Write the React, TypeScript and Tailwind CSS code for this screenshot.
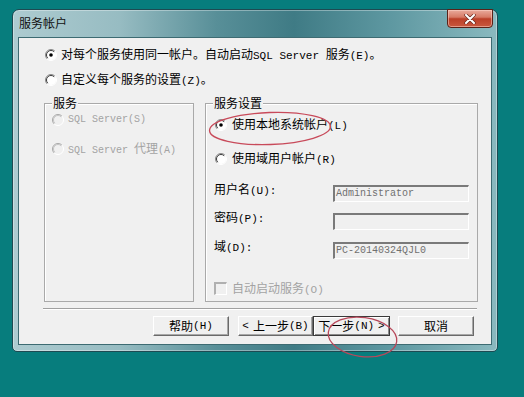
import React from "react"

const CJK = "font-['Noto_Sans_CJK_SC',sans-serif]"
const MONO = "font-['Liberation_Mono','Noto_Sans_CJK_SC',monospace]"

function Radio({ checked = false, disabled = false }: { checked?: boolean; disabled?: boolean }) {
  return (
    <svg width="12" height="12" viewBox="0 0 12 12" className="shrink-0">
      <circle cx="6" cy="6" r="5" fill={disabled ? "#f0f0f0" : "#fff"} />
      <path d="M2.1 9.9 A5.5 5.5 0 0 1 9.9 2.1" fill="none" stroke={disabled ? "#a8a8a8" : "#8a8a8a"} />
      <path d="M2.8 9.2 A4.5 4.5 0 0 1 9.2 2.8" fill="none" stroke={disabled ? "#c4c4c4" : "#3c3c3c"} />
      <path d="M9.9 2.1 A5.5 5.5 0 0 1 2.1 9.9" fill="none" stroke="#fff" />
      {checked && <circle cx="6" cy="6" r="1.8" fill="#000" />}
    </svg>
  )
}

function Field({ value }: { value?: string }) {
  return (
    <div className="w-[136px] h-[17px] bg-[#f0f0f0] border-t-2 border-l-2 border-t-[#7a7a7a] border-l-[#7a7a7a] border-r border-b border-r-white border-b-white flex items-center pl-[1px]">
      <span className={`${MONO} text-[10px] leading-[12px] text-[#707070]`}>{value}</span>
    </div>
  )
}

function Btn({ w, focus = false, children }: { w: string; focus?: boolean; children: React.ReactNode }) {
  return (
    <div
      className={`${w} h-[20px] flex items-center justify-center bg-[#f0f0f0] text-[12px] leading-[12px] text-black ${
        focus
          ? "border border-[#3a3a3a] shadow-[inset_1px_1px_0_#fff,inset_-1px_-1px_0_#8a8a8a]"
          : "border border-t-white border-l-white border-r-[#6a6a6a] border-b-[#6a6a6a] shadow-[inset_-1px_-1px_0_#a8a8a8]"
      }`}
    >
      {children}
    </div>
  )
}

// mnemonic like (E) drawn in the narrow mono face
function Key({ k }: { k: string }) {
  return <span className={`${MONO} text-[11px]`}>{k}</span>
}

export default function App() {
  return (
    <div className={`relative w-[524px] h-[397px] bg-[#077d7d] pt-[9px] pl-[12px] overflow-hidden ${CJK}`}>
      {/* window */}
      <div className="w-[486px] h-[343px] flex flex-col rounded-t-[7px] rounded-b-[5px] border border-[#1e4a52] bg-[linear-gradient(90deg,#adcbd0_0%,#97bcc2_22%,#588f98_42%,#3f7b85_58%,#5e98a1_78%,#8ab9bf_100%)] shadow-[inset_0_0_0_1px_rgba(255,255,255,0.35)]">
        {/* title bar */}
        <div className="h-[27px] flex justify-between pl-[6px] pr-[4px]">
          <span className="mt-[7px] text-[12px] leading-[12px] text-[#111]">服务帐户</span>
          <div className="-mt-[1px] w-[46px] h-[19px] flex items-center justify-center rounded-b-[4px] border border-[#5a2218] bg-[linear-gradient(180deg,#e9aa9c_0%,#d77a66_42%,#bb3f28_52%,#c9583e_100%)] shadow-[inset_0_0_0_1px_rgba(255,220,210,0.5)]">
            <svg width="12" height="10" viewBox="0 0 12 10">
              <path d="M2 1 L10 9 M10 1 L2 9" stroke="#6a2a20" strokeWidth="3.4" strokeLinecap="round" />
              <path d="M2 1 L10 9 M10 1 L2 9" stroke="#fff" strokeWidth="2" strokeLinecap="round" />
            </svg>
          </div>
        </div>

        {/* client area */}
        <div className="ml-[5px] w-[474px] h-[308px] bg-[#f0f0f0] border border-[#3d6b72] flex flex-col text-[12px] leading-[12px] text-black">
          <div className="pt-[9px] pl-[26px]">
            <div className="h-[16px] flex items-center gap-[4px]">
              <Radio checked />
              <span>
                对每个服务使用同一帐户。自动启动<span className={`${MONO} text-[11px]`}>SQL Server </span>服务<Key k="(E)" />。
              </span>
            </div>
            <div className="mt-[9px] h-[16px] flex items-center gap-[4px]">
              <Radio />
              <span>
                自定义每个服务的设置<Key k="(Z)" />。
              </span>
            </div>
          </div>

          {/* group boxes */}
          <div className="mt-[15px] ml-[25px] flex gap-[11px]">
            <div className="w-[150px] h-[199px] border border-[#a9a9a9] shadow-[inset_1px_1px_0_#fff] flex flex-col">
              <span className="-mt-[7px] ml-[7px] self-start bg-[#f0f0f0] px-[1px] h-[12px]">服务</span>
              <div className="mt-[3px] pl-[7px] h-[16px] flex items-center gap-[4px] text-[#a3a3a3]">
                <Radio disabled />
                <span className={`${MONO} text-[10px]`}>SQL Server(S)</span>
              </div>
              <div className="mt-[13px] pl-[7px] h-[16px] flex items-center gap-[4px] text-[#a3a3a3]">
                <Radio disabled />
                <span>
                  <span className={`${MONO} text-[10px]`}>SQL Server </span>代理<span className={`${MONO} text-[10px]`}>(A)</span>
                </span>
              </div>
            </div>

            <div className="w-[273px] h-[199px] border border-[#a9a9a9] shadow-[inset_1px_1px_0_#fff] flex flex-col">
              <span className="-mt-[7px] ml-[7px] self-start bg-[#f0f0f0] px-[1px] h-[12px]">服务设置</span>
              <div className="mt-[8px] pl-[9px] h-[16px] flex items-center gap-[5px]">
                <Radio checked />
                <span>
                  使用本地系统帐户<Key k="(L)" />
                </span>
              </div>
              <div className="mt-[18px] pl-[9px] h-[16px] flex items-center gap-[5px]">
                <Radio />
                <span>
                  使用域用户帐户<Key k="(R)" />
                </span>
              </div>

              <div className="mt-[18px] pl-[8px] flex items-start">
                <span className="w-[119px] -mt-[2px]">
                  用户名<Key k="(U):" />
                </span>
                <Field value="Administrator" />
              </div>
              <div className="mt-[11px] pl-[8px] flex items-start">
                <span className="w-[119px] -mt-[2px]">
                  密码<Key k="(P):" />
                </span>
                <Field />
              </div>
              <div className="mt-[12px] pl-[8px] flex items-start">
                <span className="w-[119px] -mt-[2px]">
                  域<Key k="(D):" />
                </span>
                <Field value="PC-20140324QJL0" />
              </div>

              <div className="mt-[23px] pl-[8px] h-[13px] flex items-center gap-[5px] text-[#a3a3a3]">
                <div className="w-[13px] h-[13px] bg-[#f0f0f0] border-t-2 border-l-2 border-t-[#b0b0b0] border-l-[#b0b0b0] border-r border-b border-r-white border-b-white" />
                <span>
                  自动启动服务<Key k="(O)" />
                </span>
              </div>
            </div>
          </div>

          {/* separator */}
          <div className="mt-[6px] ml-[24px] w-[434px] h-[2px] border-t border-t-[#a0a0a0] border-b border-b-white" />

          {/* buttons */}
          <div className="mt-[6px] ml-[134px] flex">
            <Btn w="w-[76px]">
              帮助<Key k="(H)" />
            </Btn>
            <div className="ml-[9px]">
              <Btn w="w-[75px]">
                <span className={`${MONO} text-[11px] mr-[4px]`}>&lt;</span>上一步<Key k="(B)" />
              </Btn>
            </div>
            <Btn w="w-[77px]" focus>
              下一步<Key k="(N)" />
              <span className={`${MONO} text-[11px] ml-[4px]`}>&gt;</span>
            </Btn>
            <div className="ml-[8px]">
              <Btn w="w-[76px]">取消</Btn>
            </div>
          </div>
        </div>
      </div>

      {/* red annotation marks */}
      <svg className="absolute inset-0 pointer-events-none" width="524" height="397">
        <ellipse cx="270" cy="128.5" rx="60.5" ry="16" fill="none" stroke="#c84a5a" strokeWidth="1.3" transform="rotate(-2 270 128.5)" />
        <ellipse cx="362.5" cy="337" rx="34.5" ry="19.5" fill="none" stroke="#b8485a" strokeWidth="1.3" transform="rotate(8 362.5 337)" />
      </svg>
    </div>
  )
}
